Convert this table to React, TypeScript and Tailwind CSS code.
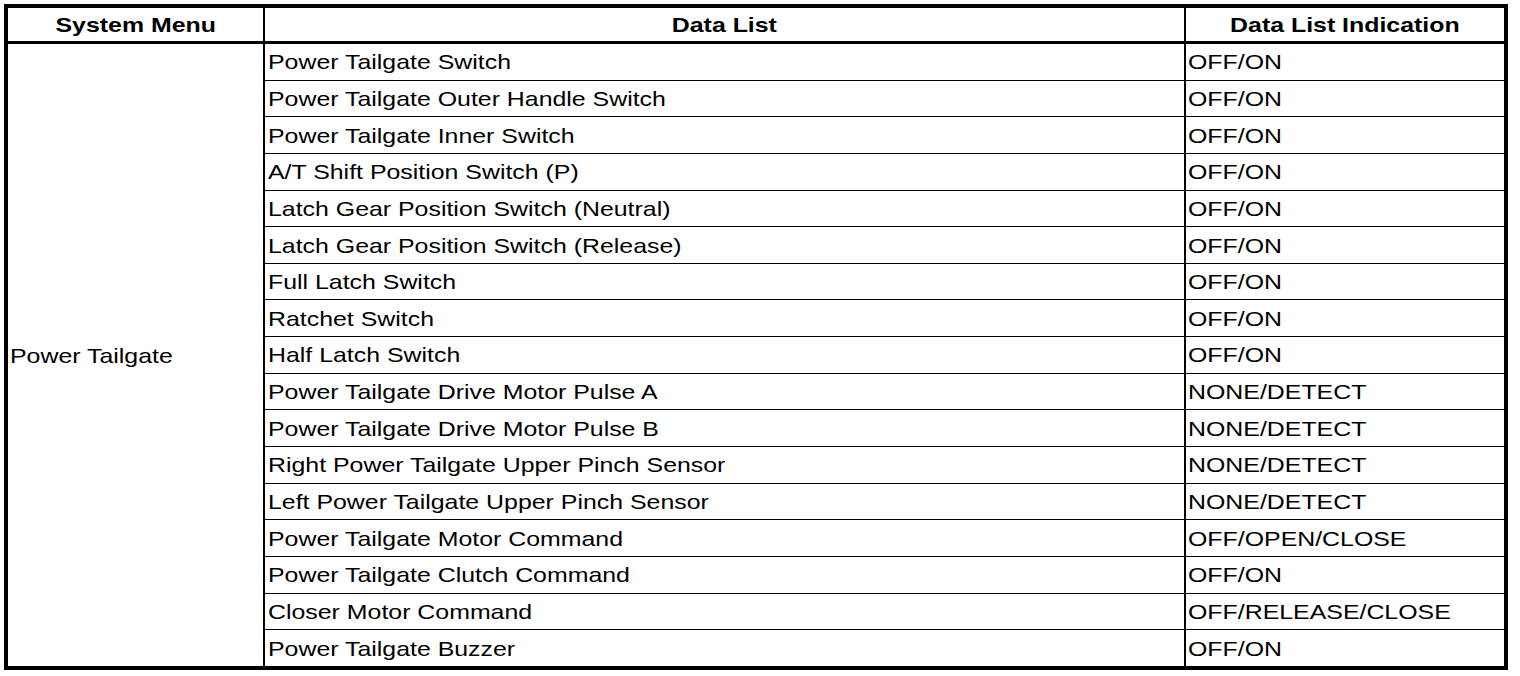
import React from 'react';

const rows: [string, string][] = [
  ['Power Tailgate Switch', 'OFF/ON'],
  ['Power Tailgate Outer Handle Switch', 'OFF/ON'],
  ['Power Tailgate Inner Switch', 'OFF/ON'],
  ['A/T Shift Position Switch (P)', 'OFF/ON'],
  ['Latch Gear Position Switch (Neutral)', 'OFF/ON'],
  ['Latch Gear Position Switch (Release)', 'OFF/ON'],
  ['Full Latch Switch', 'OFF/ON'],
  ['Ratchet Switch', 'OFF/ON'],
  ['Half Latch Switch', 'OFF/ON'],
  ['Power Tailgate Drive Motor Pulse A', 'NONE/DETECT'],
  ['Power Tailgate Drive Motor Pulse B', 'NONE/DETECT'],
  ['Right Power Tailgate Upper Pinch Sensor', 'NONE/DETECT'],
  ['Left Power Tailgate Upper Pinch Sensor', 'NONE/DETECT'],
  ['Power Tailgate Motor Command', 'OFF/OPEN/CLOSE'],
  ['Power Tailgate Clutch Command', 'OFF/ON'],
  ['Closer Motor Command', 'OFF/RELEASE/CLOSE'],
  ['Power Tailgate Buzzer', 'OFF/ON'],
];

// text in the source is a touch wider than Arial, so stretch it a bit
function Txt({ children, center }: { children: React.ReactNode; center?: boolean }) {
  return (
    <span
      className={
        center
          ? 'inline-block whitespace-nowrap scale-x-[1.185] origin-center'
          : 'inline-block whitespace-nowrap scale-x-[1.185] origin-left'
      }
    >
      {children}
    </span>
  );
}

export default function App() {
  return (
    <div className="w-[1520px] h-[676px] bg-white pt-[4px] pl-[4px] font-['Liberation_Sans',Arial,sans-serif] text-[21px] leading-none text-black">
      <div className="w-[1504px] h-[666px] border-4 border-black flex flex-col">
        {/* header */}
        <div className="flex h-[36px] shrink-0 border-b-[3px] border-black font-bold">
          <div className="w-[257px] border-r-2 border-black flex items-center justify-center">
            <Txt center>System Menu</Txt>
          </div>
          <div className="w-[921px] border-r-2 border-black flex items-center justify-center">
            <Txt center>Data List</Txt>
          </div>
          <div className="flex-1 flex items-center justify-center">
            <Txt center>Data List Indication</Txt>
          </div>
        </div>

        {/* body */}
        <div className="flex flex-1">
          <div className="w-[257px] border-r-2 border-black flex items-center pl-[2px]">
            <Txt>Power Tailgate</Txt>
          </div>
          <div className="flex-1 flex flex-col">
            {rows.map(([name, value], i) => (
              <div
                key={name}
                className={
                  i === rows.length - 1
                    ? 'flex flex-1 basis-0'
                    : 'flex flex-1 basis-0 border-b border-black'
                }
              >
                <div className="w-[921px] border-r-2 border-black flex items-center pl-[3px]">
                  <Txt>{name}</Txt>
                </div>
                <div className="flex-1 flex items-center pl-[2px]">
                  <Txt>{value}</Txt>
                </div>
              </div>
            ))}
          </div>
        </div>
      </div>
    </div>
  );
}
